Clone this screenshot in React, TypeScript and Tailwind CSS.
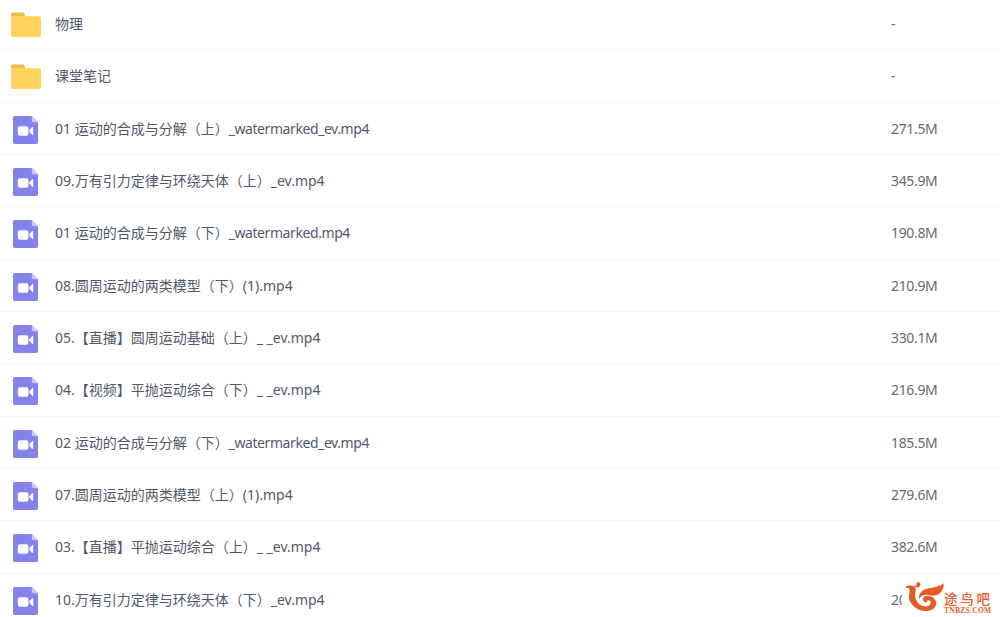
interface FileItem {
  name: string;
  suffix?: string;
  size: string;
  type: 'folder' | 'video';
}

const FILES: FileItem[] = [
  { name: '物理', size: '-', type: 'folder' },
  { name: '课堂笔记', size: '-', type: 'folder' },
  { name: '01 运动的合成与分解（上）', suffix: '_watermarked_ev.mp4', size: '271.5M', type: 'video' },
  { name: '09.万有引力定律与环绕天体（上）_ev.mp4', size: '345.9M', type: 'video' },
  { name: '01 运动的合成与分解（下）', suffix: '_watermarked.mp4', size: '190.8M', type: 'video' },
  { name: '08.圆周运动的两类模型（下）(1).mp4', size: '210.9M', type: 'video' },
  { name: '05.【直播】圆周运动基础（上）_ _ev.mp4', size: '330.1M', type: 'video' },
  { name: '04.【视频】平抛运动综合（下）_ _ev.mp4', size: '216.9M', type: 'video' },
  { name: '02 运动的合成与分解（下）', suffix: '_watermarked_ev.mp4', size: '185.5M', type: 'video' },
  { name: '07.圆周运动的两类模型（上）(1).mp4', size: '279.6M', type: 'video' },
  { name: '03.【直播】平抛运动综合（上）_ _ev.mp4', size: '382.6M', type: 'video' },
  { name: '10.万有引力定律与环绕天体（下）_ev.mp4', size: '20', type: 'video' },
];

function FolderIcon() {
  return (
    <svg className="h-[26px] w-[30px]" viewBox="0 0 30 26">
      <path d="M0 2.2Q0 .5 1.7 .5H11.5Q12.6 .5 13.1 1.5L14.5 5H0Z" fill="#e9bd4e" />
      <path d="M0 4.3H28.3Q30 4.3 30 6V23.3Q30 25 28.3 25H1.7Q0 25 0 23.3Z" fill="#ffd35c" />
    </svg>
  );
}

function VideoIcon() {
  return (
    <svg className="h-[28px] w-[25px]" viewBox="0 0 25 28">
      <path d="M1.8 0H18.8L25 6.2V26.2Q25 28 23.2 28H1.8Q0 28 0 26.2V1.8Q0 0 1.8 0Z" fill="#8483ec" />
      <path d="M18.8 0L25 6.2H20.4Q18.8 6.2 18.8 4.6Z" fill="#c9c8fa" />
      <rect x="4.8" y="10.2" width="10.6" height="9.6" rx="2.2" fill="#fff" />
      <path d="M16.4 14.2L19.2 11.2Q20.2 10.6 20.2 11.7V18.3Q20.2 19.4 19.2 18.8L16.4 15.8Z" fill="#fff" />
    </svg>
  );
}

function Watermark() {
  return (
    <div className="absolute top-[577px] left-[902px] flex h-[38px] w-[96px] items-start bg-white text-[#e55a26]">
      <svg className="mt-[4px] ml-[2px] h-[32px] w-[40px] shrink-0" viewBox="102 63 120 96" fill="currentColor">
        <path d="M106 82C112 75 130 74 136 84C140 92 133 101 136 113C140 128 151 137 163 139C175 141 183 134 182 126C181 119 170 119 169 128C160 127 156 119 161 112C167 104 184 107 193 116C203 127 199 142 186 149C170 157 145 153 131 139C119 127 115 116 118 102C119 94 120 87 115 85C112 83 109 84 106 82Z" />
        <path d="M147 117C145 99 158 88 177 85C195 82 208 80 221 70C222 87 214 100 201 105C187 110 174 102 162 105C154 107 150 111 147 117Z" />
        <path d="M131 76C135 82 142 85 148 80C154 74 151 67 144 67C139 67 137 72 141 75C138 79 135 77 131 76Z" />
      </svg>
      <div className="mt-[13px] flex w-[50px] flex-col">
        <span className="font-['Noto_Sans_CJK_SC',sans-serif] text-[13.5px] leading-[16px] font-medium tracking-[2.8px] whitespace-nowrap">
          途鸟吧
        </span>
        <span className="mt-px font-['Liberation_Serif',serif] text-[7.5px] leading-[7px] font-bold tracking-[0.3px] whitespace-nowrap">
          TNBZS.COM
        </span>
      </div>
    </div>
  );
}

export default function App() {
  return (
    <div className="relative h-[617px] w-[1000px] overflow-hidden bg-white font-['Noto_Sans','Noto_Sans_CJK_SC',sans-serif] text-[14px]">
      <ul className="-mt-[2px]">
        {FILES.map((file) => (
          <li key={file.name + file.size} className="flex h-[52.33px] items-center border-b border-[#f5f6f8]">
            <div className="flex w-[55px] shrink-0 items-center pt-[3px] pl-[11px]">
              {file.type === 'folder' ? (
                <FolderIcon />
              ) : (
                <div className="pl-[2px]">
                  <VideoIcon />
                </div>
              )}
            </div>
            <span className="w-[836px] shrink-0 whitespace-pre text-[#4f596c]">
              {file.name}
              {file.suffix && <span className="tracking-[-0.42px]">{file.suffix}</span>}
            </span>
            <span className="tracking-[-0.35px] text-[#666a70]">{file.size}</span>
          </li>
        ))}
      </ul>
      <Watermark />
    </div>
  );
}
